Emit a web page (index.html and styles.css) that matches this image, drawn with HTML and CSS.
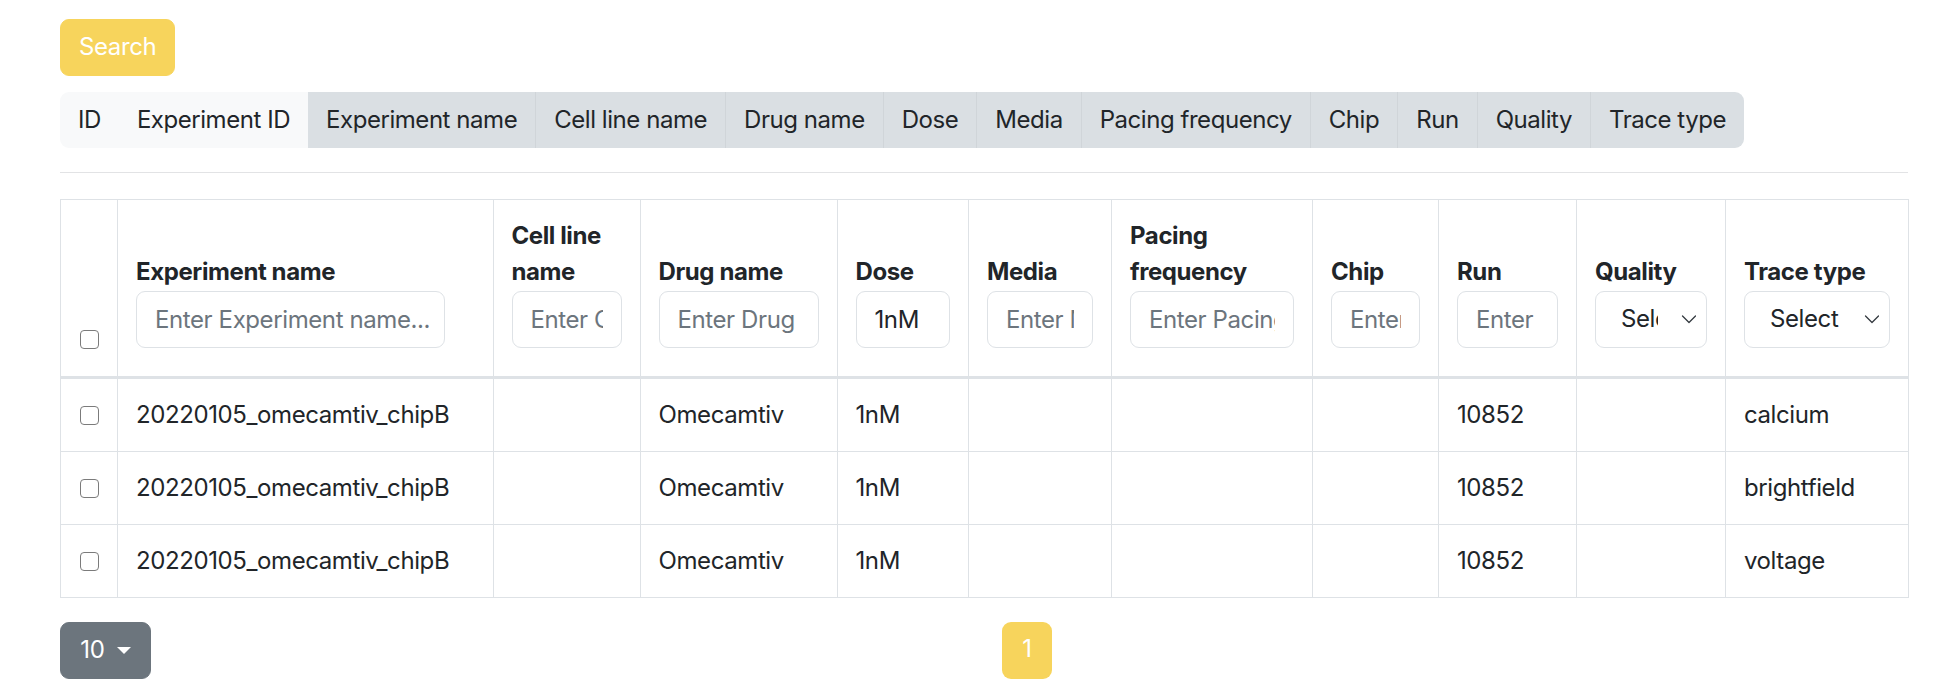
FILE: index.html
```html
<!DOCTYPE html>
<html lang="en">
<head>
<meta charset="utf-8">
<title>Experiments</title>
<link rel="stylesheet" href="styles.css">
</head>
<body>
<div class="page">
  <div class="toolbar">
    <button class="btn btn-search" type="button">Search</button>
  </div>

  <div class="col-toggle">
    <button class="tg tg-off" type="button">ID</button>
    <button class="tg tg-off" type="button">Experiment ID</button>
    <button class="tg tg-on tg-first-on" type="button">Experiment name</button>
    <button class="tg tg-on" type="button">Cell line name</button>
    <button class="tg tg-on" type="button">Drug name</button>
    <button class="tg tg-on" type="button">Dose</button>
    <button class="tg tg-on" type="button">Media</button>
    <button class="tg tg-on" type="button">Pacing frequency</button>
    <button class="tg tg-on" type="button">Chip</button>
    <button class="tg tg-on" type="button">Run</button>
    <button class="tg tg-on" type="button">Quality</button>
    <button class="tg tg-on" type="button">Trace type</button>
  </div>

  <hr class="sep">

  <table class="grid">
    <colgroup>
      <col class="w-cb">
      <col class="w-exp">
      <col class="w-cell">
      <col class="w-drug">
      <col class="w-dose">
      <col class="w-media">
      <col class="w-pacing">
      <col class="w-chip">
      <col class="w-run">
      <col class="w-quality">
      <col class="w-trace">
    </colgroup>
    <thead>
      <tr>
        <th class="cb-cell"><div class="cb-wrap"><input type="checkbox" class="cb"></div></th>
        <th><div class="th-label">Experiment name</div><input class="fc fc-exp" type="text" placeholder="Enter Experiment name..."></th>
        <th><div class="th-label">Cell line name</div><input class="fc" type="text" placeholder="Enter Cell line name..."></th>
        <th><div class="th-label">Drug name</div><input class="fc" type="text" placeholder="Enter Drug name..."></th>
        <th><div class="th-label">Dose</div><input class="fc" type="text" value="1nM"></th>
        <th><div class="th-label">Media</div><input class="fc" type="text" placeholder="Enter Media..."></th>
        <th><div class="th-label">Pacing frequency</div><input class="fc" type="text" placeholder="Enter Pacing frequency..."></th>
        <th><div class="th-label">Chip</div><input class="fc" type="text" placeholder="Enter Chip..."></th>
        <th><div class="th-label">Run</div><input class="fc" type="text" placeholder="Enter Run..."></th>
        <th><div class="th-label">Quality</div><select class="fs"><option>Select</option></select></th>
        <th><div class="th-label">Trace type</div><select class="fs"><option>Select</option></select></th>
      </tr>
    </thead>
    <tbody>
      <tr>
        <td class="cb-cell"><input type="checkbox" class="cb"></td>
        <td>20220105_omecamtiv_chipB</td>
        <td></td>
        <td>Omecamtiv</td>
        <td>1nM</td>
        <td></td>
        <td></td>
        <td></td>
        <td>10852</td>
        <td></td>
        <td>calcium</td>
      </tr>
      <tr>
        <td class="cb-cell"><input type="checkbox" class="cb"></td>
        <td>20220105_omecamtiv_chipB</td>
        <td></td>
        <td>Omecamtiv</td>
        <td>1nM</td>
        <td></td>
        <td></td>
        <td></td>
        <td>10852</td>
        <td></td>
        <td>brightfield</td>
      </tr>
      <tr>
        <td class="cb-cell"><input type="checkbox" class="cb"></td>
        <td>20220105_omecamtiv_chipB</td>
        <td></td>
        <td>Omecamtiv</td>
        <td>1nM</td>
        <td></td>
        <td></td>
        <td></td>
        <td>10852</td>
        <td></td>
        <td>voltage</td>
      </tr>
    </tbody>
  </table>

  <div class="pager">
    <button class="btn btn-size" type="button"><span>10</span> <span class="caret"></span></button>
    <ul class="pages">
      <li><a class="page-link active" href="#">1</a></li>
    </ul>
  </div>
</div>
</body>
</html>
```

FILE: styles.css
```css
* {
  box-sizing: border-box;
}

html,
body {
  margin: 0;
  background: #ffffff;
}

body {
  font-family: Inter, "Noto Sans", "Liberation Sans", sans-serif;
  font-size: 24px;
  line-height: 36px;
  letter-spacing: -0.4px;
  color: #212529;
}

.page {
  padding: 19px 52px 0 60px;
}

.toolbar {
  display: flex;
}

.btn {
  font: inherit;
  letter-spacing: inherit;
  line-height: 36px;
  height: 56.5px;
  padding: 9px 18px;
  border: 1.5px solid transparent;
  border-radius: 9px;
  cursor: pointer;
}

.btn-search {
  background: #f7d45c;
  border-color: #f7d45c;
  color: #ffffff;
  min-width: 115px;
}

.col-toggle {
  display: inline-flex;
  margin-top: 16px;
  border-radius: 9px;
  overflow: hidden;
}

.tg {
  flex: 0 0 auto;
  white-space: nowrap;
  font: inherit;
  letter-spacing: -0.45px;
  line-height: 36px;
  height: 56.5px;
  padding: 9px 18px;
  border: 0;
  color: #212529;
  cursor: pointer;
}

.tg-off {
  background: #f8f9fa;
}

.tg-on {
  background: #dadfe3;
  border-left: 1.5px solid #d0d5d9;
}

.tg-first-on {
  border-left: 0;
}

.sep {
  margin: 24px 0 26px;
  border: 0;
  border-top: 1px solid #e2e3e5;
}

.grid {
  width: 100%;
  table-layout: fixed;
  border-collapse: collapse;
}

.w-cb { width: 57px; }
.w-exp { width: 375.5px; }
.w-cell { width: 147px; }
.w-drug { width: 197px; }
.w-dose { width: 131.5px; }
.w-media { width: 143px; }
.w-pacing { width: 201px; }
.w-chip { width: 126px; }
.w-run { width: 138px; }
.w-quality { width: 149px; }
.w-trace { width: 182.5px; }

.grid th,
.grid td {
  border: 1px solid #dee2e6;
  text-align: left;
}

.grid th {
  font-weight: 700;
  vertical-align: bottom;
  padding: 18px 18px 28px;
  border-bottom: 3px solid #dee2e6;
}

.grid td {
  padding: 18px;
  vertical-align: middle;
  white-space: nowrap;
}

.th-label {
  margin-bottom: 1px;
}

.grid .cb-cell {
  text-align: center;
  padding-left: 0;
  padding-right: 0;
}

.grid th.cb-cell {
  padding-bottom: 27px;
}

.cb-wrap {
  display: flex;
  justify-content: center;
}

.cb {
  appearance: none;
  -webkit-appearance: none;
  display: inline-block;
  width: 19px;
  height: 19px;
  margin: 0;
  border: 1.5px solid #7b7b7b;
  border-radius: 4px;
  background: #ffffff;
  vertical-align: middle;
}

.fc,
.fs {
  display: block;
  width: 100%;
  height: 56.5px;
  font: inherit;
  font-weight: 400;
  letter-spacing: inherit;
  line-height: 36px;
  color: #212529;
  background: #ffffff;
  border: 1.5px solid #dee2e6;
  border-radius: 9px;
  padding: 9px 18px;
  outline: none;
}

.fc::placeholder {
  color: #6c757d;
  opacity: 1;
}

.fc-exp {
  width: 309px;
  padding-right: 8px;
}

.fs {
  appearance: none;
  -webkit-appearance: none;
  padding: 9px 48px 9px 25px;
  background-image: url("data:image/svg+xml,%3Csvg xmlns='http://www.w3.org/2000/svg' viewBox='0 0 16 16'%3E%3Cpath fill='none' stroke='%23343a40' stroke-width='1.3' stroke-linecap='round' stroke-linejoin='round' d='M1.5 5 8 11.5 14.5 5'/%3E%3C/svg%3E");
  background-repeat: no-repeat;
  background-position: right 9px center;
  background-size: 16px 16px;
}

.pager {
  display: flex;
  align-items: flex-start;
  margin-top: 24.5px;
}

.btn-size {
  background: #6c757d;
  border-color: #6c757d;
  color: #ffffff;
  white-space: nowrap;
  min-width: 91px;
}

.caret {
  display: inline-block;
  margin-left: 6px;
  vertical-align: 4px;
  border-top: 7px solid #ffffff;
  border-left: 7px solid transparent;
  border-right: 7px solid transparent;
}

.pages {
  list-style: none;
  margin: 0 0 0 851px;
  padding: 0;
  display: flex;
}

.page-link {
  display: block;
  min-width: 50px;
  height: 56.5px;
  padding: 9px 18px;
  line-height: 36px;
  text-align: center;
  border-radius: 9px;
  text-decoration: none;
}

.page-link.active {
  background: #f7d45c;
  color: #ffffff;
}
```
